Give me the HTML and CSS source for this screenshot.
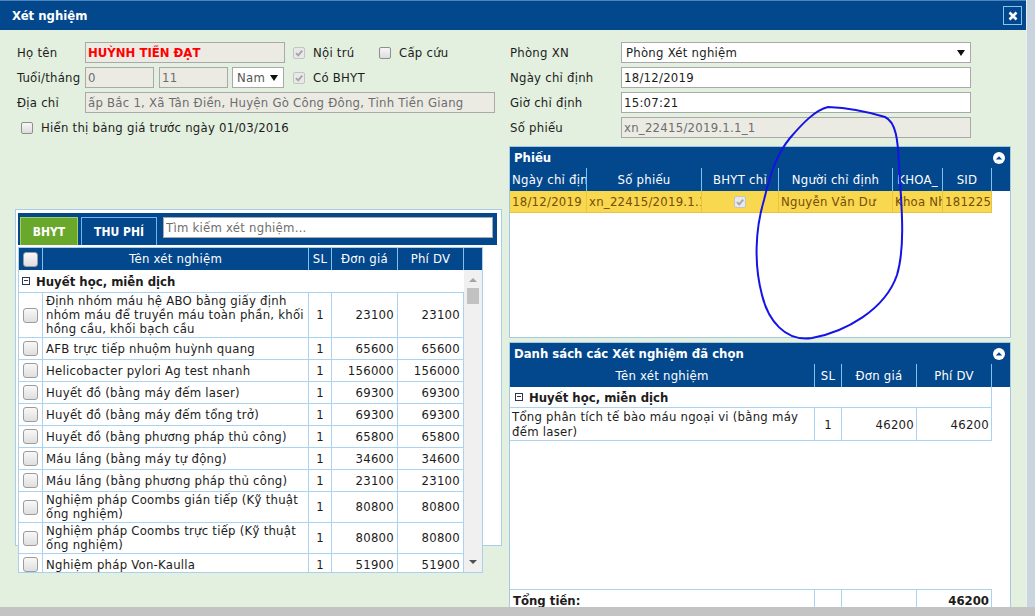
FILE: index.html
```html
<!DOCTYPE html>
<html lang="vi">
<head>
<meta charset="utf-8">
<title>Xét nghiệm</title>
<link rel="stylesheet" href="styles.css">
</head>
<body>
<div class="dialog">
  <div class="titlebar">
    <span class="title">Xét nghiệm</span>
    <span class="close"><svg width="10" height="10" viewBox="0 0 10 10"><path d="M1.5 1.5 L8.5 8.5 M8.5 1.5 L1.5 8.5" stroke="#fff" stroke-width="2.6"/></svg></span>
  </div>
  <div class="main">
    <div class="left">
      <div class="form">
        <div class="frow">
          <span class="lbl">Họ tên</span>
          <input class="inp dis name w200" value="HUỲNH TIẾN ĐẠT" readonly>
          <span class="chk first"><span class="cb dis"><svg width="10" height="10" viewBox="0 0 10 10"><path d="M2 5.2 L4.2 7.4 L8.2 2.6" stroke="#a4a4a4" stroke-width="1.8" fill="none"/></svg></span><span>Nội trú</span></span>
          <span class="chk"><span class="cb"></span><span>Cấp cứu</span></span>
        </div>
        <div class="frow">
          <span class="lbl">Tuổi/tháng</span>
          <input class="inp dis w69" value="0" readonly>
          <input class="inp dis w69 ml5" value="11" readonly>
          <div class="sel nam"><span>Nam</span><span class="arrow"></span></div>
          <span class="chk second"><span class="cb dis"><svg width="10" height="10" viewBox="0 0 10 10"><path d="M2 5.2 L4.2 7.4 L8.2 2.6" stroke="#a4a4a4" stroke-width="1.8" fill="none"/></svg></span><span>Có BHYT</span></span>
        </div>
        <div class="frow">
          <span class="lbl">Địa chỉ</span>
          <input class="inp dis w410" value="ấp Bắc 1, Xã Tân Điền, Huyện Gò Công Đông, Tỉnh Tiền Giang" readonly>
        </div>
        <div class="frow show">
          <span class="chk"><span class="cb"></span><span>Hiển thị bảng giá trước ngày 01/03/2016</span></span>
        </div>
      </div>

      <div class="tests">
        <div class="tabbar">
          <div class="tab bhyt">BHYT</div>
          <div class="tab thu">THU PHÍ</div>
          <input class="search" placeholder="Tìm kiếm xét nghiệm...">
        </div>
        <div class="grid">
          <div class="ghead">
            <div class="hcb"><span class="cbig"></span></div>
            <div>Tên xét nghiệm</div>
            <div>SL</div>
            <div>Đơn giá</div>
            <div>Phí DV</div>
            <div></div>
          </div>
          <div class="gbody">
            <div class="rows">
              <div class="grp"><svg width="8" height="8" viewBox="0 0 8 8"><rect x=".5" y=".5" width="7" height="7" fill="none" stroke="#2d3850"/><path d="M2 3.5h4" stroke="#2d3850"/></svg><span>Huyết học, miễn dịch</span></div>
              <div class="row"><div class="cbc"><span class="cbig"></span></div><div>Định nhóm máu hệ ABO bằng giấy định<br>nhóm máu để truyền máu toàn phần, khối<br>hồng cầu, khối bạch cầu</div><div class="c">1</div><div class="n">23100</div><div class="n">23100</div></div>
              <div class="row"><div class="cbc"><span class="cbig"></span></div><div>AFB trực tiếp nhuộm huỳnh quang</div><div class="c">1</div><div class="n">65600</div><div class="n">65600</div></div>
              <div class="row"><div class="cbc"><span class="cbig"></span></div><div>Helicobacter pylori Ag test nhanh</div><div class="c">1</div><div class="n">156000</div><div class="n">156000</div></div>
              <div class="row"><div class="cbc"><span class="cbig"></span></div><div>Huyết đồ (bằng máy đếm laser)</div><div class="c">1</div><div class="n">69300</div><div class="n">69300</div></div>
              <div class="row"><div class="cbc"><span class="cbig"></span></div><div>Huyết đồ (bằng máy đếm tổng trở)</div><div class="c">1</div><div class="n">69300</div><div class="n">69300</div></div>
              <div class="row"><div class="cbc"><span class="cbig"></span></div><div>Huyết đồ (bằng phương pháp thủ công)</div><div class="c">1</div><div class="n">65800</div><div class="n">65800</div></div>
              <div class="row"><div class="cbc"><span class="cbig"></span></div><div>Máu lắng (bằng máy tự động)</div><div class="c">1</div><div class="n">34600</div><div class="n">34600</div></div>
              <div class="row"><div class="cbc"><span class="cbig"></span></div><div>Máu lắng (bằng phương pháp thủ công)</div><div class="c">1</div><div class="n">23100</div><div class="n">23100</div></div>
              <div class="row"><div class="cbc"><span class="cbig"></span></div><div>Nghiệm pháp Coombs gián tiếp (Kỹ thuật<br>ống nghiệm)</div><div class="c">1</div><div class="n">80800</div><div class="n">80800</div></div>
              <div class="row"><div class="cbc"><span class="cbig"></span></div><div>Nghiệm pháp Coombs trực tiếp (Kỹ thuật<br>ống nghiệm)</div><div class="c">1</div><div class="n">80800</div><div class="n">80800</div></div>
              <div class="row"><div class="cbc"><span class="cbig"></span></div><div>Nghiệm pháp Von-Kaulla</div><div class="c">1</div><div class="n">51900</div><div class="n">51900</div></div>
            </div>
            <div class="vscroll"><span class="up"></span><span class="thumb"></span><span class="down"></span></div>
          </div>
        </div>
      </div>
    </div>

    <div class="right">
      <div class="form">
        <div class="frow"><span class="lbl">Phòng XN</span><div class="sel phong"><span>Phòng Xét nghiệm</span><span class="arrow"></span></div></div>
        <div class="frow"><span class="lbl">Ngày chỉ định</span><input class="inp w350" value="18/12/2019" readonly></div>
        <div class="frow"><span class="lbl">Giờ chỉ định</span><input class="inp w350" value="15:07:21" readonly></div>
        <div class="frow"><span class="lbl">Số phiếu</span><input class="inp dis w350" value="xn_22415/2019.1.1_1" readonly></div>
      </div>

      <div class="panel phieu">
        <div class="phdr"><span>Phiếu</span><svg width="12" height="12" viewBox="0 0 12 12"><circle cx="6" cy="6" r="6" fill="#fff"/><path d="M2.8 7.6 L6 4.2 L9.2 7.6 Z" fill="#03478c"/></svg></div>
        <div class="chdr pcols">
          <div>Ngày chỉ định</div><div>Số phiếu</div><div>BHYT chỉ</div><div>Người chỉ định</div><div>KHOA_</div><div>SID</div><div></div>
        </div>
        <div class="prow">
          <div>18/12/2019</div><div>xn_22415/2019.1.1_1</div><div class="pc"><span class="cb dis"><svg width="10" height="10" viewBox="0 0 10 10"><path d="M2 5.2 L4.2 7.4 L8.2 2.6" stroke="#a4a4a4" stroke-width="1.8" fill="none"/></svg></span></div><div>Nguyễn Văn Dư</div><div>Khoa Nhi</div><div>181225</div>
        </div>
      </div>

      <div class="panel chosen">
        <div class="phdr"><span>Danh sách các Xét nghiệm đã chọn</span><svg width="12" height="12" viewBox="0 0 12 12"><circle cx="6" cy="6" r="6" fill="#fff"/><path d="M2.8 7.6 L6 4.2 L9.2 7.6 Z" fill="#03478c"/></svg></div>
        <div class="chdr ccols">
          <div>Tên xét nghiệm</div><div>SL</div><div>Đơn giá</div><div>Phí DV</div><div></div>
        </div>
        <div class="clist">
          <div class="cgrp"><svg width="8" height="8" viewBox="0 0 8 8"><rect x=".5" y=".5" width="7" height="7" fill="none" stroke="#2d3850"/><path d="M2 3.5h4" stroke="#2d3850"/></svg><span>Huyết học, miễn dịch</span></div>
          <div class="crow"><div>Tổng phân tích tế bào máu ngoại vi (bằng máy<br>đếm laser)</div><div class="c">1</div><div class="n">46200</div><div class="n">46200</div></div>
        </div>
        <div class="cfoot"><div>Tổng tiền:</div><div></div><div></div><div class="n">46200</div></div>
      </div>
    </div>
  </div>
</div>
<div class="statusbar"></div>
<svg class="annot" width="1035" height="616" viewBox="0 0 1035 616"><path d="M828 107 C850 108 872 113 885 117 C896 122 898 140 899 165 C901 200 906 245 897 275 C885 310 845 332 812 338 C785 342 768 320 762 295 C754 265 755 230 764 200 C770 175 776 155 790 138 C802 124 815 110 828 107 Z" fill="none" stroke="#1414e6" stroke-width="2"/></svg>
</body>
</html>
```
FILE: styles.css
```css
* { box-sizing: border-box; }
html, body { margin: 0; padding: 0; }
body {
  width: 1035px; height: 616px; overflow: hidden; position: relative;
  background: #cad4de;
  font-family: "DejaVu Sans Condensed", "Liberation Sans", sans-serif;
  font-size: 13px; color: #1c1c1c; letter-spacing: 0.25px;
}
.dialog {
  width: 1027px; height: 607px; background: #e3f0df;
  border-right: 1px solid #e9eef3; overflow: hidden;
  display: flex; flex-direction: column;
}
.titlebar {
  flex: none; height: 30px; background: #03478c; border-top: 1px solid #4c84bd;
  display: flex; align-items: center; justify-content: space-between;
  padding: 0 4px 0 12px;
}
.title { color: #fff; font-weight: bold; letter-spacing: 0; }
.close {
  width: 19px; height: 19px; border: 1px solid #86c6f3;
  display: flex; align-items: center; justify-content: center;
}
.main { flex: 1; display: flex; gap: 7px; padding: 12px 0 0 15px; min-height: 0; }
.left { width: 487px; flex: none; display: flex; flex-direction: column; }
.right { width: 502px; flex: none; display: flex; flex-direction: column; }

.form { display: flex; flex-direction: column; gap: 4px; }
.frow { display: flex; align-items: center; height: 21px; }
.left .frow { padding-left: 2px; }
.lbl { flex: none; width: 68px; white-space: nowrap; }
.right .lbl { width: 112px; padding-left: 1px; }
.inp {
  flex: none; height: 21px; border: 1px solid #a9a9a9; padding: 0 2px; margin: 0;
  font: inherit; letter-spacing: inherit; color: #1c1c1c; background: #fff; outline: none;
}
.inp.dis { background: #ebebe4; color: #6d6d6d; }
.inp.name { color: #ff0000; font-weight: bold; letter-spacing: 0; }
.w200 { width: 200px; }
.w69 { width: 69px; }
.w410 { width: 410px; }
.w350 { width: 350px; }
.ml5 { margin-left: 5px; }
.sel {
  flex: none; height: 21px; border: 1px solid #a9a9a9; background: #fff;
  display: flex; align-items: center; justify-content: space-between; padding: 0 5px 0 4px;
}
.sel.nam { width: 52px; margin-left: 4px; color: #555; }
.sel.phong { width: 350px; }
.arrow {
  width: 0; height: 0; border-left: 4px solid transparent; border-right: 4px solid transparent;
  border-top: 6px solid #111;
}
.chk { display: flex; align-items: center; gap: 8px; white-space: nowrap; }
.chk.first { width: 86px; margin-left: 8px; }
.chk.second { margin-left: 9px; }
.show .chk { margin-left: 4px; }
.cb {
  flex: none; width: 12px; height: 12px; border: 1px solid #8e8f8f; border-radius: 2px;
  background: linear-gradient(#f7f7f7, #dcdcdc);
  display: inline-flex; align-items: center; justify-content: center;
}
.cb.dis { border-color: #c4c4c4; background: #e8e8e8; }
.cb svg { display: block; }
.cbig {
  display: block; width: 15px; height: 15px; border-radius: 3px; border: 1px solid #9c9c9c;
  background: linear-gradient(#f8f8f8, #dfdfdf);
}

.tests {
  margin-top: 71px; height: 337px; background: #fff; border: 1px solid #a9cde9;
  padding: 3px 4px 0 2px;
}
.tabbar {
  height: 32px; background: #03478c; display: flex; align-items: flex-start;
  padding: 4px 4px 0 2px;
}
.tab {
  flex: none; height: 28px; display: flex; align-items: center; justify-content: center;
  color: #fff; font-weight: bold; font-size: 12px; letter-spacing: 0;
  border: 1px solid #6cb7ee; border-bottom: none;
}
.tab.bhyt { width: 58px; background: #6aa82c; border-color: #a2cf5b; }
.tab.thu { width: 76px; margin-left: 3px; }
.search {
  margin: 0 0 0 6px; width: 330px; height: 21px; border: 1px solid #a9a9a9;
  padding: 0 2px; font: inherit; letter-spacing: inherit; outline: none;
}
.search::placeholder { color: #6f6f6f; }

.grid {
  margin-top: 2px; width: 465px; height: 326px; border: 1px solid #a9d0ee; background: #fff;
  display: flex; flex-direction: column;
}
.ghead {
  flex: none; height: 22px; display: grid;
  grid-template-columns: 24px 266px 23px 66px 66px 18px;
  background: #03478c; color: #fff;
}
.ghead > div {
  border-right: 1px solid #7fc1ef; text-align: center; line-height: 22px;
  white-space: nowrap; overflow: hidden;
}
.ghead > div:last-child { border-right: none; }
.ghead .hcb { display: flex; align-items: center; justify-content: center; }
.gbody { flex: 1; display: flex; min-height: 0; }
.rows { width: 445px; overflow: hidden; }
.grp {
  height: 23px; border-bottom: 1px solid #a9d3f1; display: flex; align-items: center;
  gap: 6px; padding-left: 3px; font-weight: bold; letter-spacing: 0;
}
.grp svg, .cgrp svg { flex: none; display: block; }
.row { display: grid; grid-template-columns: 24px 266px 23px 66px 66px; min-height: 22px; }
.row > div {
  border-right: 1px solid #a9d3f1; border-bottom: 1px solid #a9d3f1;
  display: flex; align-items: center; padding: 1px 3px; line-height: 14px;
  white-space: nowrap; overflow: hidden;
}
.row > .cbc { justify-content: center; padding: 0; }
.c { justify-content: center; }
.n { justify-content: flex-end; text-align: right; }
.vscroll {
  width: 18px; background: #f0f0f0; display: flex; flex-direction: column; align-items: center;
}
.up {
  margin-top: 8px; width: 0; height: 0; border-left: 4px solid transparent;
  border-right: 4px solid transparent; border-bottom: 4px solid #a3a3a3;
}
.thumb { margin-top: 6px; width: 12px; height: 16px; background: #c1c1c1; }
.down {
  margin-top: auto; margin-bottom: 8px; width: 0; height: 0; border-left: 4px solid transparent;
  border-right: 4px solid transparent; border-top: 4px solid #505050;
}

.panel { flex: none; border: 1px solid #a4c7e3; background: #fff; display: flex; flex-direction: column; }
.phieu { margin-top: 8px; height: 192px; }
.chosen { margin-top: 4px; height: 280px; }
.phdr {
  flex: none; height: 21px; background: #03478c; color: #fff; font-weight: bold; letter-spacing: 0;
  display: flex; align-items: center; justify-content: space-between; padding: 0 5px 0 4px;
}
.chdr { flex: none; height: 23px; background: #03478c; color: #fff; display: grid; }
.chdr > div {
  border-right: 1px solid #7fc1ef; text-align: center; line-height: 23px;
  padding: 0 2px; white-space: nowrap; overflow: hidden;
}
.chdr > div:last-child { border-right: none; }
.pcols { grid-template-columns: 77px 115px 77px 114px 50px 49px 18px; }
.ccols { grid-template-columns: 305px 27px 75px 75px 18px; }
.prow {
  width: 482px; height: 22px; display: grid;
  grid-template-columns: 77px 115px 77px 114px 50px 49px;
  background: #f7d84f; color: #7a4b0a;
}
.prow > div {
  border-right: 1px solid #ecc33e; border-bottom: 1px solid #ecc33e;
  line-height: 21px; padding: 0 2px; white-space: nowrap; overflow: hidden;
}
.prow > .pc { display: flex; align-items: center; justify-content: center; }
.clist { flex: none; height: 202px; }
.cgrp {
  width: 482px; height: 21px; border-right: 1px solid #a9d3f1; border-bottom: 1px solid #a9d3f1;
  display: flex; align-items: center; gap: 6px; padding-left: 5px; font-weight: bold; letter-spacing: 0;
}
.crow { width: 482px; display: grid; grid-template-columns: 305px 27px 75px 75px; }
.crow > div {
  border-right: 1px solid #a9d3f1; border-bottom: 1px solid #a9d3f1;
  display: flex; align-items: center; padding: 1px 2px; line-height: 15px;
  white-space: nowrap; overflow: hidden;
}
.cfoot {
  width: 482px; display: grid; grid-template-columns: 305px 27px 75px 75px;
  border-top: 1px solid #a9d3f1; font-weight: bold; letter-spacing: 0;
}
.cfoot > div { border-right: 1px solid #a9d3f1; line-height: 21px; padding: 0 2px 0 3px; white-space: nowrap; }
.cfoot > .n { text-align: right; padding-right: 2px; }
.statusbar { height: 9px; background: #c3c3c3; }
.annot { position: absolute; left: 0; top: 0; pointer-events: none; }
```
